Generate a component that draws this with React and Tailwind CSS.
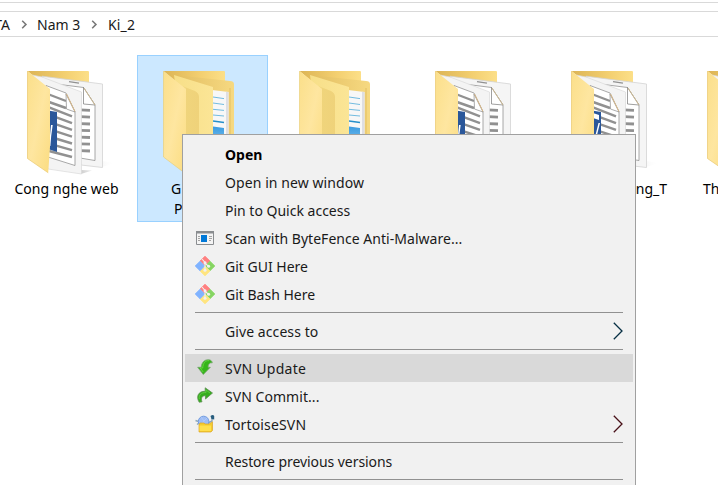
import React from "react";

function DocLines({ x1, x2, rightYs, slopes, width }) {
  return rightYs.map((y, i) => (
    <path key={i} d={`M${x1} ${y - slopes[i]}L${x2} ${y}`} stroke="#919191" strokeWidth={width} />
  ));
}

function FolderDefs() {
  return (
    <svg className="absolute h-0 w-0">
      <defs>
        <linearGradient id="flap" x1="0" y1="0" x2="1" y2="1">
          <stop offset="0" stopColor="#fbdf8a" />
          <stop offset="0.5" stopColor="#fee6a0" />
          <stop offset="1" stopColor="#fbdc80" />
        </linearGradient>
        <linearGradient id="back" x1="0" y1="0" x2="1" y2="0">
          <stop offset="0" stopColor="#dcb455" />
          <stop offset="0.6" stopColor="#f3cf70" />
          <stop offset="1" stopColor="#fcdf88" />
        </linearGradient>
        <linearGradient id="midBack" x1="0" y1="0" x2="1" y2="0">
          <stop offset="0" stopColor="#e2bd60" />
          <stop offset="1" stopColor="#f6d981" />
        </linearGradient>
        <linearGradient id="mid" x1="0" y1="0" x2="1" y2="0">
          <stop offset="0" stopColor="#f7df88" />
          <stop offset="1" stopColor="#fbe596" />
        </linearGradient>
        <linearGradient id="fold" x1="0" y1="0" x2="1" y2="0">
          <stop offset="0" stopColor="#f0d57c" />
          <stop offset="1" stopColor="#efd27a" />
        </linearGradient>
        <linearGradient id="photo" x1="0" y1="0" x2="0" y2="1">
          <stop offset="0" stopColor="#3b9be0" />
          <stop offset="1" stopColor="#a5dcfa" />
        </linearGradient>
        <linearGradient id="shade" x1="0" y1="0" x2="1" y2="0">
          <stop offset="0" stopColor="#cfcfcf" />
          <stop offset="1" stopColor="#fff" stopOpacity="0" />
        </linearGradient>
      </defs>
    </svg>
  );
}

function DocsFolder({ variant }) {
  return (
    <svg viewBox="2 56 129 122" className="block h-[122px] w-[129px]">
      <path d="M102 161L115 163L102 167ZM81 170L92 170.5L81 174Z" fill="url(#shade)" />
      <path d="M27.5 71H88Q89 71 89 72V90H50Z" fill="url(#back)" />
      <path d="M42 76.2L102.5 84V167.5L81 165Z" fill="#f5f5f5" stroke="#d3d3d3" strokeWidth=".8" />
      <path d="M60 84.5L83.5 87.5L95 105V160.5L80 158Z" fill="#fff" stroke="#858585" strokeWidth=".7" />
      <DocLines x1={80} x2={90} width={2.8} rightYs={[110.4, 117.2, 124, 130.7, 137.5, 144.2, 151]} slopes={[0.6, 0.5, 0.4, 0.4, 0.3, 0.3, 0.3]} />
      <path d="M69 81.6L79 83.2" stroke="#919191" strokeWidth="1.2" />
      <path d="M83.5 87.5V104L95 105Z" fill="#fff" stroke="#777" strokeWidth=".7" />
      <path d="M84 88L95 105" stroke="#d9c191" strokeWidth=".8" />
      <path d="M32 75L42 77L81.5 92V174L48 169Z" fill="#f4f4f4" stroke="#dadada" strokeWidth=".7" />
      <path d="M46 85.5L66 93L75 112V165.5L48 157Z" fill="#fff" stroke="#858585" strokeWidth=".7" />
      <DocLines x1={49} x2={66} width={2.4} rightYs={[101, 108]} slopes={[6.5, 6]} />
      <DocLines x1={49} x2={72} width={2.4} rightYs={[116.3, 123.1, 129.9, 136.7, 143.5, 150.2, 157]} slopes={[9, 8.5, 8, 7.5, 7, 6.5, 6]} />
      <path d="M66 94L66.5 109L75 112Z" fill="#fff" stroke="#888" strokeWidth=".7" />
      <path d="M66.5 94L75 111.5" stroke="#d9b989" />
      <path d="M48 110.5L57 112V152L48 149Z" fill="#2a579a" />
      {variant === "frame" ? (
        <path d="M49 113L55 115V120L49 118ZM51 137L54.5 123H56L52.5 137Z" fill="#fff" />
      ) : (
        <path d="M51 125H52.7L51.2 136L50.4 146H49Z" fill="#fff" />
      )}
      <path d="M27.5 71L50 89V147L48.2 172.8L27.5 158.5Z" fill="url(#flap)" />
      <path d="M27.5 71V158.5L48.2 172.8" fill="none" stroke="#e9c76d" strokeWidth=".7" />
    </svg>
  );
}

function PictureFolder() {
  return (
    <svg viewBox="2 56 129 122" className="block h-[122px] w-[129px]">
      <path d="M27.5 71H88Q89 71 89 72V90H50Z" fill="url(#back)" />
      <path d="M38 75L94 81Q97.8 81 98 84V168H77Z" fill="url(#midBack)" />
      <path d="M93.5 88H94.5V168H93.5Z" fill="#e3bf62" />
      <path d="M76 90L92.5 92V166L76 163Z" fill="#f7f7f7" />
      <path d="M90 91.7L92.5 92V166H90Z" fill="#dedee2" />
      <path d="M77 97L88 98.6M77 103L88 104.5M77 109.3L88 110.4M77 115L88 116" stroke="#63b4dc" strokeWidth=".9" />
      <path d="M77 121L88 122.5" stroke="#258fca" strokeWidth="1.3" />
      <path d="M77 126.5L88 128V155L77 154Z" fill="url(#photo)" />
      <path d="M38 75L77 87V172L50 164Z" fill="url(#mid)" />
      <path d="M46 86L59 91Q63 93 63 97V168H50V89Z" fill="url(#fold)" />
      <path d="M27.5 71L50 89V174L27.5 157Z" fill="url(#flap)" />
      <path d="M27.5 71V157L50 174" fill="none" stroke="#e8cb70" strokeWidth=".6" />
    </svg>
  );
}

function Entry({ selected, children, label }) {
  return (
    <div
      className={`h-[167px] w-[131px] shrink-0 border ${
        selected ? "border-[#99d1ff] bg-[#cce8ff]" : "border-transparent"
      }`}
    >
      {children}
      <div className="h-10 whitespace-nowrap pt-px text-[14px] leading-5 text-black">{label}</div>
    </div>
  );
}

function Crumb() {
  return (
    <svg viewBox="0 0 7 9" className="h-[9px] w-[7px] shrink-0" fill="none" stroke="#777" strokeWidth="1.5">
      <path d="M1.2 .7L5 4.4L1.2 8.2" />
    </svg>
  );
}

function ScanIcon() {
  return (
    <svg viewBox="0 0 18 14" className="h-[14px] w-[18px]">
      <path d="M.5 .5H17.5V13.5H.5Z" fill="#f4f4f4" stroke="#8a8d90" />
      <path d="M0 0H18V2.5H0Z" fill="#8a8d90" />
      <path d="M2 5.5H4M2 7.5H4M2 9.5H4M13 5.5H16M13 7.5H16M13 9.5H15" stroke="#a3a3a3" />
      <path d="M5 4H11V11H5Z" fill="#0078d7" />
    </svg>
  );
}

function GitIcon() {
  return (
    <svg viewBox="0 0 20 20" className="h-5 w-5">
      <path d="M10 .2L15 5L10 9.8L5 5Z" fill="#ff8080" stroke="#ff8080" strokeWidth=".8" strokeLinejoin="round" />
      <path d="M15 5.2L19.8 10L15 14.8L10.4 10Z" fill="#86d562" stroke="#86d562" strokeWidth=".8" strokeLinejoin="round" />
      <path d="M10 10.4L15 15L10 19.8L5 15Z" fill="#ffe580" stroke="#ffe580" strokeWidth=".8" strokeLinejoin="round" />
      <path d="M5 5.2L9.6 10L5 14.8L.2 10Z" fill="#80b3ff" stroke="#80b3ff" strokeWidth=".8" strokeLinejoin="round" />
      <path d="M7 3L10 6.5V15M10 7L13.5 10.3" stroke="#f1f1f1" strokeWidth="1.1" fill="none" />
      <circle cx="10" cy="6.8" r="1.5" fill="#f1f1f1" />
      <circle cx="13.6" cy="10.3" r="1.5" fill="#f1f1f1" />
      <circle cx="10" cy="14.2" r="1.5" fill="#f1f1f1" />
    </svg>
  );
}

function UpdateIcon() {
  return (
    <svg viewBox="0 0 16 16" className="mb-[3px] h-4 w-4">
      <path d="M15.3 3.8C12.8 3.4 11.2 5 11 8.3H13.3L6.3 15.5L.7 8.3H4.2C4.6 3.5 7.4 .5 11.6 .7C13.5 .8 14.9 1.8 15.3 3.8Z" fill="#36b51b" stroke="#75a66b" strokeWidth=".8" />
      <path d="M12 1.7C8.5 1.2 6 4 5.7 9H3.2L6.2 13" fill="none" stroke="#63d641" strokeWidth="1" />
    </svg>
  );
}

function CommitIcon() {
  return (
    <svg viewBox="0 0 16 16" className="mb-[3px] h-4 w-4">
      <path d="M2.2 15.2C-1.2 9.8 1.2 4 8.2 4.3V.8L15.5 6L8.5 12V8.8C5.1 8.4 3.6 11.2 5 14.8Z" fill="#36ad1e" stroke="#5e8f54" strokeWidth=".8" />
      <path d="M2.3 12.2C1.7 7.7 4.2 5.2 9 5.6V3L13 6" fill="none" stroke="#5ecb41" />
    </svg>
  );
}

function TortoiseIcon() {
  return (
    <svg viewBox="0 0 20 18" className="h-[18px] w-5">
      <path d="M.5 5.5L3.5 6.5M2 9.5L4.5 7.5M13 8L17 6V3" fill="none" stroke="#8fa9bb" strokeWidth="1.4" />
      <circle cx="8.6" cy="6.5" r="5.3" fill="#9ebdf4" stroke="#719be0" />
      <path d="M6 2L9 6L7 9M12 3L9 6" fill="none" stroke="#b4cbfb" strokeWidth=".8" />
      <path d="M15.5 1Q18-1 19.2 1V4.5L16.5 4Z" fill="#285d7e" />
      <path d="M4 9.5L5 8H9L10 9H14L17.5 6.8V15.5L16 17H4Z" fill="#f4cc2d" stroke="#dba528" strokeWidth=".7" />
      <path d="M4.5 10.5H16V16H4.5Z" fill="#ffdf4d" />
    </svg>
  );
}

function MenuItem({ icon, label, bold, active, arrow, spacing = "" }) {
  return (
    <div className={`flex h-7 items-center pr-2.5 ${active ? "bg-[#d9d9d9]" : ""}`}>
      <div className="flex w-10 items-center justify-center">{icon}</div>
      <span className={`whitespace-nowrap ${bold ? "font-bold text-black" : ""} ${spacing}`}>{label}</span>
      {arrow && (
        <svg viewBox="0 0 10 18" className="ml-auto h-[18px] w-[10px]" fill="none">
          <path d="M.8 .8L9 9L.8 17.2" stroke={arrow} strokeWidth="1.3" />
        </svg>
      )}
    </div>
  );
}

function Separator() {
  return (
    <div className="h-[9px] px-2.5 pt-1">
      <div className="h-px bg-[#919191]" />
    </div>
  );
}

export default function App() {
  return (
    <div className="relative h-[485px] w-[718px] overflow-hidden bg-white font-['Noto_Sans',sans-serif]">
      <FolderDefs />
      <div className="h-[3px] border-b border-[#d9d9d9]" />
      <div className="mt-2 flex h-[26px] items-center border-y border-[#d9d9d9] text-[14px] text-[#1a1a1a]">
        <div className="flex w-[10px] shrink-0 justify-end">TA</div>
        <div className="ml-[11px] flex"><Crumb /></div>
        <span className="ml-[9px] w-[45px] whitespace-nowrap">Nam 3</span>
        <div className="ml-[9px] flex"><Crumb /></div>
        <span className="ml-[10px] whitespace-nowrap tracking-[0.15px]">Ki_2</span>
      </div>
      <div className="mt-[18px] flex gap-[5px] pl-px">
        <Entry label={<div className="text-center tracking-[0.08px]">Cong nghe web</div>}><DocsFolder /></Entry>
        <Entry selected label={<><div className="pl-[33px]">G</div><div className="pl-[36px]">P</div></>}><PictureFolder /></Entry>
        <Entry><PictureFolder /></Entry>
        <Entry><DocsFolder /></Entry>
        <Entry label={<div className="pr-[8px] text-right">ng_T</div>}><DocsFolder variant="frame" /></Entry>
        <Entry label={<div className="pl-[21px]">Th</div>}><DocsFolder /></Entry>
      </div>

      <div className="absolute left-[182px] top-[134px] h-[400px] w-[454px] border border-[#a0a0a0] bg-[#f1f1f1] px-[2px] pt-[5px] text-[14px] text-[#1a1a1a]">
        <MenuItem bold label="Open" />
        <MenuItem label="Open in new window" spacing="tracking-[0.08px]" />
        <MenuItem label="Pin to Quick access" />
        <MenuItem icon={<ScanIcon />} label="Scan with ByteFence Anti-Malware..." spacing="tracking-[0.03px]" />
        <MenuItem icon={<GitIcon />} label="Git GUI Here" />
        <MenuItem icon={<GitIcon />} label="Git Bash Here" />
        <Separator />
        <MenuItem label="Give access to" arrow="#073044" spacing="tracking-[0.08px]" />
        <Separator />
        <MenuItem active icon={<UpdateIcon />} label="SVN Update" spacing="tracking-[0.25px]" />
        <MenuItem icon={<CommitIcon />} label="SVN Commit..." spacing="tracking-[0.05px]" />
        <MenuItem icon={<TortoiseIcon />} label="TortoiseSVN" arrow="#481018" spacing="tracking-[0.15px]" />
        <Separator />
        <MenuItem label="Restore previous versions" spacing="tracking-[-0.06px]" />
        <Separator />
      </div>
    </div>
  );
}
